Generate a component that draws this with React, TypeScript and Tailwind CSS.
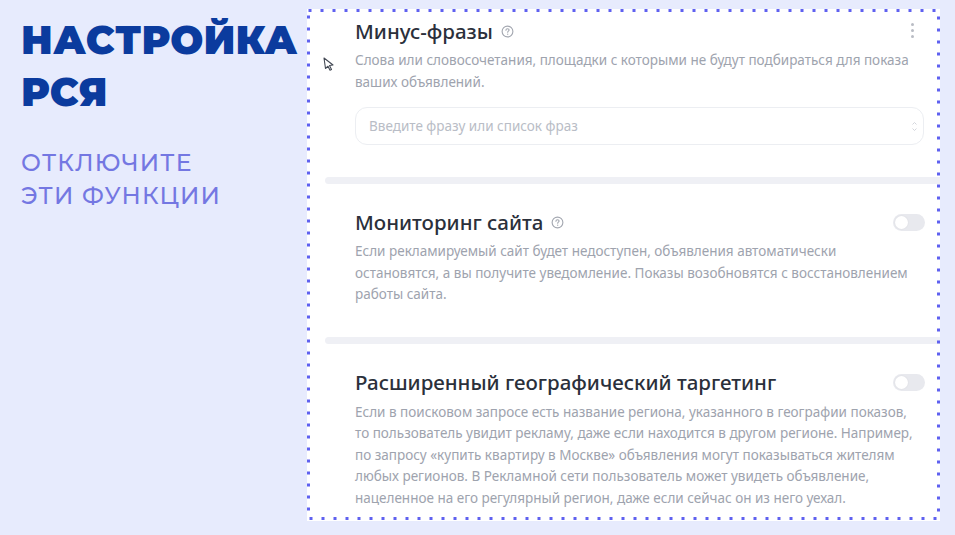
import React from "react";

const sans = { fontFamily: '"Noto Sans", "Open Sans", Arial, sans-serif' };

function HelpIcon() {
  return (
    <svg width="13" height="13" viewBox="0 0 14 14" className="shrink-0">
      <circle cx="7" cy="7" r="5.8" fill="none" stroke="#a3a7b0" strokeWidth="1.2" />
      <path d="M5.3 5.6c0-1 .8-1.6 1.7-1.6s1.7.6 1.7 1.5c0 1.1-1.5 1.2-1.5 2.3" fill="none" stroke="#a3a7b0" strokeWidth="1.2" strokeLinecap="round" />
      <circle cx="7.2" cy="9.9" r="0.7" fill="#a3a7b0" />
    </svg>
  );
}

function Toggle() {
  return (
    <div className="w-[32px] h-[17px] rounded-full bg-[#e8e9ee] flex items-center px-[2px] shrink-0">
      <div className="w-[13px] h-[13px] rounded-full bg-white shadow-[0_0_2px_rgba(0,0,0,0.08)]" />
    </div>
  );
}

function Divider() {
  return <div className="ml-[18px] h-[7px] rounded-l-full bg-[#eff0f5]" />;
}

function Dotted() {
  return (
    <svg className="absolute inset-0 pointer-events-none" width="100%" height="100%">
      <rect x="1.5" y="1.5" width="630" height="508" fill="none" stroke="#5f61f0" strokeWidth="3" strokeDasharray="3 9" />
    </svg>
  );
}

export default function App() {
  return (
    <div className="w-[955px] h-[535px] bg-[#e7ebfd] flex overflow-hidden">
      <div className="w-[307px] shrink-0 pl-[21px] pt-[14px]" style={{ fontFamily: 'Montserrat, Inter, "Liberation Sans", sans-serif' }}>
        <div className="text-[39px] leading-[52px] font-black text-[#0b3b9e] tracking-[0.3px]">
          НАСТРОЙКА
          <br />
          РСЯ
        </div>
        <div className="mt-[28px] text-[23.5px] leading-[33px] font-medium text-[#7477e2] tracking-[1.2px]">
          ОТКЛЮЧИТЕ
          <br />
          ЭТИ ФУНКЦИИ
        </div>
      </div>

      <div className="relative mt-[9px] w-[633px] h-[512px] bg-white overflow-hidden" style={sans}>
        <Dotted />

        {/* pointer cursor */}
        <svg className="absolute left-[15px] top-[47px]" width="14" height="16" viewBox="0 0 14 16">
          <path d="M2 2 L11 9 L7.5 9.5 L9.5 13.5 L8 14.2 L6 10.2 L3.5 12.5 Z" fill="white" stroke="#444a55" strokeWidth="1.1" strokeLinejoin="round" />
        </svg>

        {/* kebab menu */}
        <div className="absolute left-[604px] top-[14px] flex flex-col gap-[3px]">
          <span className="w-[3px] h-[3px] rounded-full bg-[#b9bcc4]" />
          <span className="w-[3px] h-[3px] rounded-full bg-[#b9bcc4]" />
          <span className="w-[3px] h-[3px] rounded-full bg-[#b9bcc4]" />
        </div>

        {/* Минус-фразы */}
        <section className="pt-[9px] pl-[48px] pr-[16px]">
          <div className="h-[26px] flex items-center gap-[8px]">
            <h2 className="text-[20.5px] font-medium text-[#2b303b]">Минус-фразы</h2>
            <HelpIcon />
          </div>
          <p className="mt-[6px] text-[13.5px] leading-[21.5px] text-[#9ea3ae] pr-[6px]">
            Слова или словосочетания, площадки с которыми не будут подбираться для показа ваших объявлений.
          </p>
          <div className="mt-[14px] h-[38px] rounded-[12px] border border-[#eceef2] flex items-center justify-between pl-[13px] pr-[6px]">
            <span className="text-[13.5px] text-[#b9bdc6]">Введите фразу или список фраз</span>
            <div className="flex flex-col gap-[3px]">
              <svg width="5" height="3" viewBox="0 0 5 3"><path d="M0.5 2.5 L2.5 0.5 L4.5 2.5" fill="none" stroke="#c9ccd3" strokeWidth="0.8" /></svg>
              <svg width="5" height="3" viewBox="0 0 5 3"><path d="M0.5 0.5 L2.5 2.5 L4.5 0.5" fill="none" stroke="#c9ccd3" strokeWidth="0.8" /></svg>
            </div>
          </div>
        </section>

        <div className="mt-[32px]">
          <Divider />
        </div>

        {/* Мониторинг сайта */}
        <section className="pt-[25px] pl-[48px] pr-[15px]">
          <div className="h-[26px] flex items-center justify-between">
            <div className="flex items-center gap-[8px]">
              <h2 className="text-[20.5px] font-medium text-[#2b303b]">Мониторинг сайта</h2>
              <HelpIcon />
            </div>
            <Toggle />
          </div>
          <p className="mt-[6px] text-[13.5px] leading-[21.5px] text-[#9ea3ae] pr-[7px]">
            Если рекламируемый сайт будет недоступен, объявления автоматически остановятся, а вы получите уведомление. Показы возобновятся с восстановлением работы сайта.
          </p>
        </section>

        <div className="mt-[31px]">
          <Divider />
        </div>

        {/* Расширенный географический таргетинг */}
        <section className="pt-[26px] pl-[48px] pr-[15px]">
          <div className="h-[26px] flex items-center justify-between">
            <h2 className="text-[20.5px] font-medium text-[#2b303b]">Расширенный географический таргетинг</h2>
            <Toggle />
          </div>
          <p className="mt-[6px] text-[13.5px] leading-[21.5px] text-[#9ea3ae] pr-[7px]">
            Если в поисковом запросе есть название региона, указанного в географии показов, то пользователь увидит рекламу, даже если находится в другом регионе. Например, по запросу «купить квартиру в Москве» объявления могут показываться жителям любых регионов. В Рекламной сети пользователь может увидеть объявление, нацеленное на его регулярный регион, даже если сейчас он из него уехал.
          </p>
        </section>
      </div>
    </div>
  );
}
